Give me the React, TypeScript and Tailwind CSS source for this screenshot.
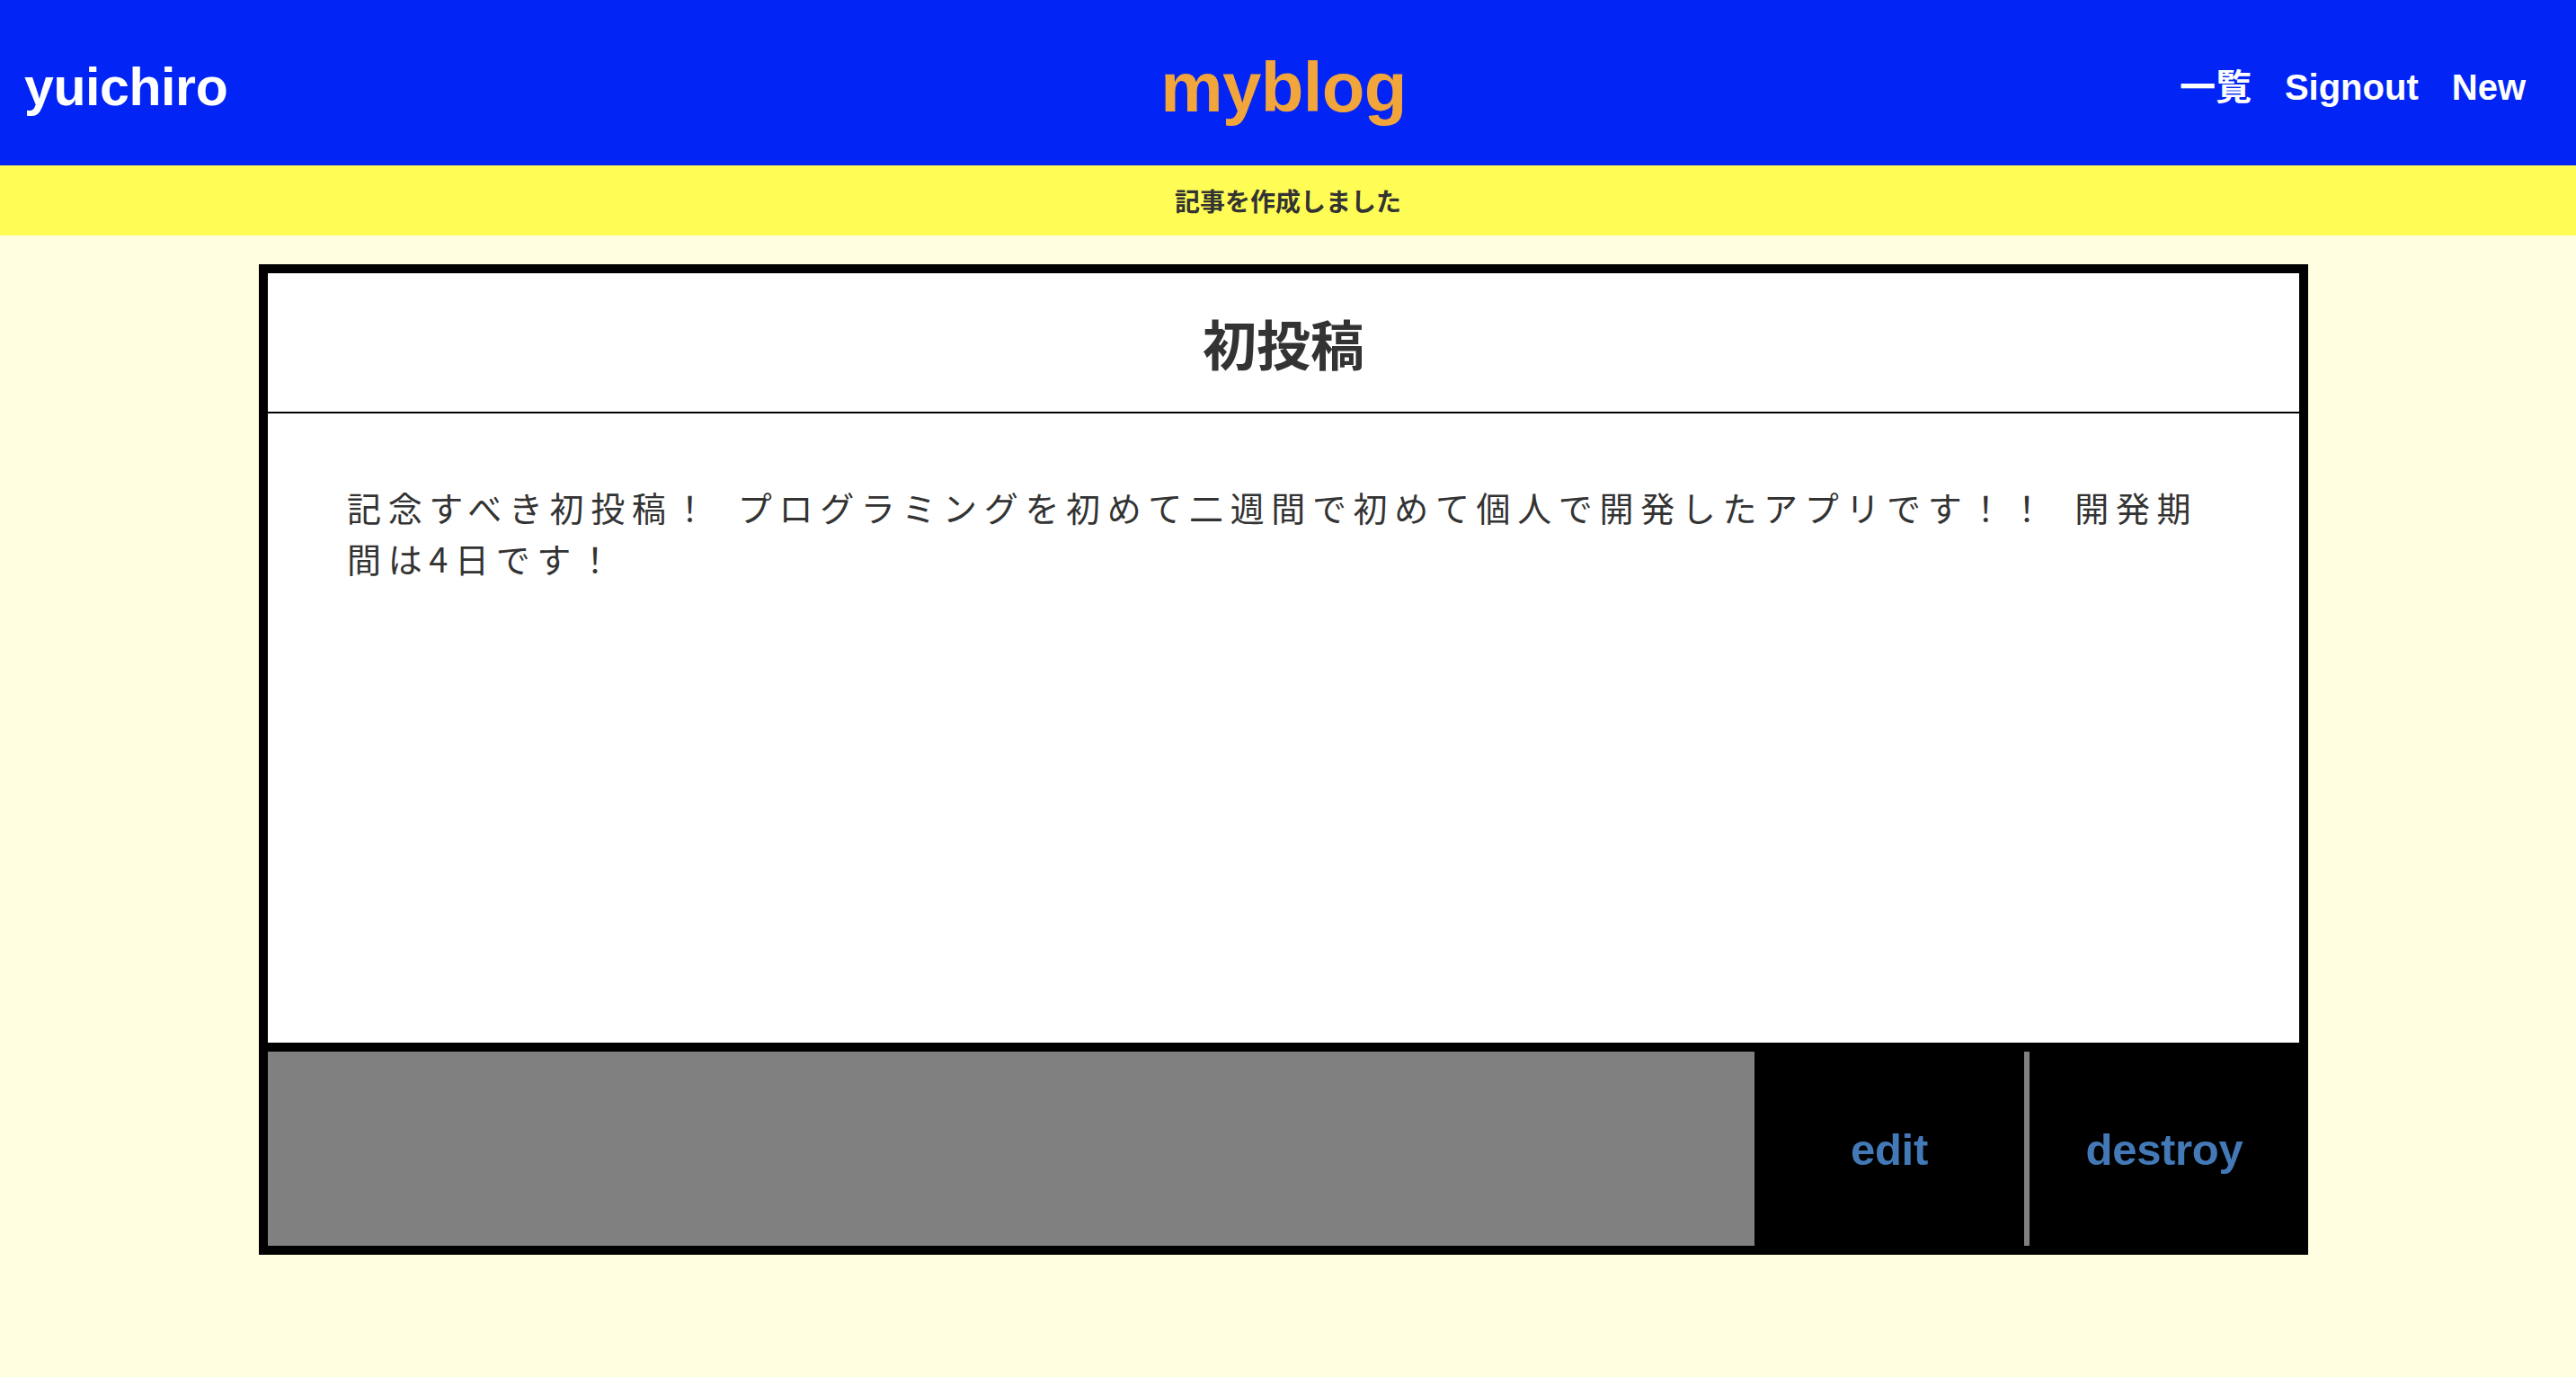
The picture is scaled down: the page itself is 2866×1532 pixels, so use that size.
import React from "react";

export default function App() {
  const sans = { fontFamily: '"Liberation Sans", "Noto Sans CJK JP", sans-serif' };
  const jp = { fontFamily: '"Noto Sans CJK JP", "Liberation Sans", sans-serif' };
  return (
    <div className="min-h-screen w-full bg-[#FFFEE0]" style={sans}>
      <header className="grid h-[184px] grid-cols-[1fr_auto_1fr] items-center bg-[#0225F5] px-[27px] pt-[10px]">
        <div className="text-[59px] font-bold tracking-[-0.4px] text-white">yuichiro</div>
        <div className="mr-[10px] text-[78px] font-bold tracking-[-0.6px] text-[#F2A53B]">myblog</div>
        <nav className="flex items-center justify-end gap-[37px] pr-[29px] text-[40px] font-bold text-white">
          <a>一覧</a>
          <a>Signout</a>
          <a>New</a>
        </nav>
      </header>
      <div className="flex h-[78px] items-center justify-center bg-[#FFFD55]">
        <p className="text-[28px] font-bold text-[#333333]" style={jp}>記事を作成しました</p>
      </div>
      <main className="pt-[32px] pb-[120px]">
        <article className="ml-[288px] w-[2280px] border-[10px] border-black bg-black">
          <div className="bg-white">
            <div className="flex h-[156px] items-center justify-center border-b-2 border-black">
              <h1 className="text-[60px] font-bold text-[#333333]" style={jp}>初投稿</h1>
            </div>
            <div className="h-[700px] pl-[88px] pr-[80px] pt-[75px]">
              <p className="text-[38px] leading-[57px] tracking-[7.65px] text-[#333333]" style={jp}>
                {"記念すべき初投稿！\u2002プログラミングを初めて二週間で初めて個人で開発したアプリです！！\u2002開発期間は4日です！"}
              </p>
            </div>
          </div>
          <div className="mt-[10px] flex h-[216px]">
            <div className="flex-1 bg-[#808080]"></div>
            <a className="flex w-[300px] items-center justify-center bg-black pt-[4px] text-[49px] font-bold tracking-[-0.3px] text-[#4279B6]">
              edit
            </a>
            <div className="w-[6px] bg-[#808080]"></div>
            <a className="flex w-[300px] items-center justify-center bg-black pt-[4px] text-[49px] font-bold tracking-[-0.3px] text-[#4279B6]">
              destroy
            </a>
          </div>
        </article>
      </main>
    </div>
  );
}
